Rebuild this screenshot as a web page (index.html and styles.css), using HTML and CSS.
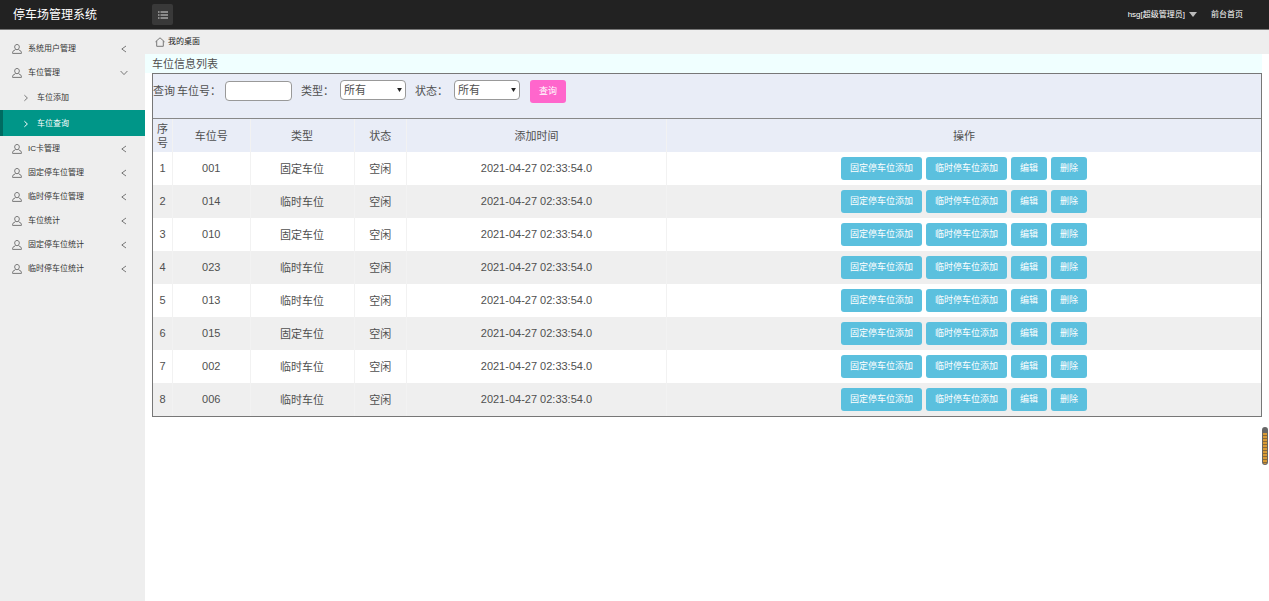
FILE: index.html
```html
<!DOCTYPE html>
<html lang="zh-CN">
<head>
<meta charset="utf-8">
<title>停车场管理系统</title>
<link rel="stylesheet" href="styles.css">
</head>
<body>
<svg class="sprite" aria-hidden="true">
  <symbol id="user" viewBox="0 0 10 10"><path d="M5 .5C3.500 .5 2.700 1.500 2.700 2.900C2.700 4.300 3.500 5.700 5 5.700C6.500 5.700 7.300 4.300 7.300 2.900C7.300 1.500 6.500 .5 5 .5ZM3.600 5.400C3.400 6.300 .6 6.600 .6 8.200V9.400H9.400V8.200C9.400 6.600 6.600 6.300 6.400 5.400"/></symbol>
  <symbol id="left" viewBox="0 0 8 8"><path d="M6 1L1.800 4L6 7"/></symbol>
  <symbol id="right" viewBox="0 0 8 8"><path d="M2.400 1.200L5.400 4L2.400 6.800"/></symbol>
  <symbol id="down" viewBox="0 0 8 8"><path d="M.6 2L4 5.600L7.400 2"/></symbol>
</svg>
<header class="topbar">
  <h1 class="brand">停车场管理系统</h1>
  <button class="toggle" type="button" aria-label="菜单">
    <svg viewBox="0 0 10 8"><path d="M0 1H1.500M2.500 1H10M0 4H1.500M2.500 4H10M0 7H1.500M2.500 7H10"/></svg>
  </button>
  <nav class="account">
    <a href="#">hsg[超级管理员]<svg class="caret" viewBox="0 0 8 5"><path d="M0 0H8L4 5Z"/></svg></a>
    <a href="#">前台首页</a>
  </nav>
</header>
<div class="shell">
  <nav class="sidebar">
    <a class="item" href="#"><svg class="user"><use href="#user"/></svg><span>系统用户管理</span><svg class="chev"><use href="#left"/></svg></a>
    <a class="item" href="#"><svg class="user"><use href="#user"/></svg><span>车位管理</span><svg class="chev"><use href="#down"/></svg></a>
    <a class="sub" href="#"><svg class="chev"><use href="#right"/></svg><span>车位添加</span></a>
    <a class="sub active" href="#"><svg class="chev"><use href="#right"/></svg><span>车位查询</span></a>
    <a class="item" href="#"><svg class="user"><use href="#user"/></svg><span>IC卡管理</span><svg class="chev"><use href="#left"/></svg></a>
    <a class="item" href="#"><svg class="user"><use href="#user"/></svg><span>固定停车位管理</span><svg class="chev"><use href="#left"/></svg></a>
    <a class="item" href="#"><svg class="user"><use href="#user"/></svg><span>临时停车位管理</span><svg class="chev"><use href="#left"/></svg></a>
    <a class="item" href="#"><svg class="user"><use href="#user"/></svg><span>车位统计</span><svg class="chev"><use href="#left"/></svg></a>
    <a class="item" href="#"><svg class="user"><use href="#user"/></svg><span>固定停车位统计</span><svg class="chev"><use href="#left"/></svg></a>
    <a class="item" href="#"><svg class="user"><use href="#user"/></svg><span>临时停车位统计</span><svg class="chev"><use href="#left"/></svg></a>
  </nav>
  <main class="main">
    <div class="crumb">
      <svg class="home" viewBox="0 0 10 10"><path d="M.5 4.800L5 .8L9.500 4.800M1.700 4V9.300H8.300V4"/></svg>
      <span>我的桌面</span>
    </div>
    <h2 class="title">车位信息列表</h2>
    <section class="panel">
      <form class="search">
        <span class="lead">查询</span>
        <label for="no">车位号<span class="colon">：</span></label>
        <input class="field" id="no" type="text">
        <label class="next" for="type">类型<span class="colon">：</span></label>
        <span class="pick"><select class="field" id="type"><option>所有</option></select><svg viewBox="0 0 6 5"><path d="M0 0H6L3 5Z"/></svg></span>
        <label class="next" for="state">状态<span class="colon">：</span></label>
        <span class="pick"><select class="field" id="state"><option>所有</option></select><svg viewBox="0 0 6 5"><path d="M0 0H6L3 5Z"/></svg></span>
        <button class="btn query" type="button">查询</button>
      </form>
      <table class="list">
        <colgroup><col class="c-index"><col class="c-no"><col class="c-type"><col class="c-state"><col class="c-time"><col></colgroup>
        <thead>
          <tr><th>序号</th><th>车位号</th><th>类型</th><th>状态</th><th>添加时间</th><th>操作</th></tr>
        </thead>
        <tbody>
          <tr><td class="num">1</td><td class="num">001</td><td>固定车位</td><td>空闲</td><td class="num">2021-04-27 02:33:54.0</td><td><div class="ops"><button class="btn" type="button">固定停车位添加</button><button class="btn" type="button">临时停车位添加</button><button class="btn" type="button">编辑</button><button class="btn" type="button">删除</button></div></td></tr>
          <tr><td class="num">2</td><td class="num">014</td><td>临时车位</td><td>空闲</td><td class="num">2021-04-27 02:33:54.0</td><td><div class="ops"><button class="btn" type="button">固定停车位添加</button><button class="btn" type="button">临时停车位添加</button><button class="btn" type="button">编辑</button><button class="btn" type="button">删除</button></div></td></tr>
          <tr><td class="num">3</td><td class="num">010</td><td>固定车位</td><td>空闲</td><td class="num">2021-04-27 02:33:54.0</td><td><div class="ops"><button class="btn" type="button">固定停车位添加</button><button class="btn" type="button">临时停车位添加</button><button class="btn" type="button">编辑</button><button class="btn" type="button">删除</button></div></td></tr>
          <tr><td class="num">4</td><td class="num">023</td><td>临时车位</td><td>空闲</td><td class="num">2021-04-27 02:33:54.0</td><td><div class="ops"><button class="btn" type="button">固定停车位添加</button><button class="btn" type="button">临时停车位添加</button><button class="btn" type="button">编辑</button><button class="btn" type="button">删除</button></div></td></tr>
          <tr><td class="num">5</td><td class="num">013</td><td>临时车位</td><td>空闲</td><td class="num">2021-04-27 02:33:54.0</td><td><div class="ops"><button class="btn" type="button">固定停车位添加</button><button class="btn" type="button">临时停车位添加</button><button class="btn" type="button">编辑</button><button class="btn" type="button">删除</button></div></td></tr>
          <tr><td class="num">6</td><td class="num">015</td><td>固定车位</td><td>空闲</td><td class="num">2021-04-27 02:33:54.0</td><td><div class="ops"><button class="btn" type="button">固定停车位添加</button><button class="btn" type="button">临时停车位添加</button><button class="btn" type="button">编辑</button><button class="btn" type="button">删除</button></div></td></tr>
          <tr><td class="num">7</td><td class="num">002</td><td>临时车位</td><td>空闲</td><td class="num">2021-04-27 02:33:54.0</td><td><div class="ops"><button class="btn" type="button">固定停车位添加</button><button class="btn" type="button">临时停车位添加</button><button class="btn" type="button">编辑</button><button class="btn" type="button">删除</button></div></td></tr>
          <tr><td class="num">8</td><td class="num">006</td><td>临时车位</td><td>空闲</td><td class="num">2021-04-27 02:33:54.0</td><td><div class="ops"><button class="btn" type="button">固定停车位添加</button><button class="btn" type="button">临时停车位添加</button><button class="btn" type="button">编辑</button><button class="btn" type="button">删除</button></div></td></tr>
        </tbody>
      </table>
    </section>
  </main>
</div>
<div class="meter" aria-hidden="true"></div>
</body>
</html>
```

FILE: styles.css
```css
* { box-sizing: border-box; }

body {
  margin: 0;
  min-height: 100vh;
  display: flex;
  flex-direction: column;
  background: #fff;
  color: #505050;
  font: 11px/14px "Liberation Sans", "Noto Sans CJK SC", sans-serif;
}

a { color: inherit; text-decoration: none; }
h1, h2 { margin: 0; font-weight: 400; }
button, input, select { font: inherit; color: inherit; }
svg { display: block; flex: none; fill: none; stroke: currentColor; }
.sprite { position: absolute; width: 0; height: 0; }

.topbar {
  height: 30px;
  display: flex;
  align-items: center;
  background: #222;
  color: #fff;
  border-bottom: 1px solid #777;
}
.brand { width: 152px; padding-left: 13px; font-size: 12px; }
.toggle {
  width: 21px;
  height: 21px;
  padding: 0;
  display: grid;
  place-items: center;
  border: 0;
  border-radius: 2px;
  background: #393939;
  color: #ddd;
}
.toggle svg { width: 10px; height: 8px; }
.account {
  margin-left: auto;
  padding-right: 26px;
  display: flex;
  gap: 14px;
  font-size: 8px;
}
.account a { display: flex; align-items: center; gap: 4px; }
.caret { width: 8px; height: 5px; fill: #bbb; stroke: none; }

.shell { flex: 1; display: flex; }
.sidebar {
  flex: none;
  width: 145px;
  padding-top: 6px;
  background: #eee;
  color: #333;
  font-size: 8px;
}
.item { height: 24px; padding: 1px 17px 0 12px; display: flex; align-items: center; gap: 6px; }
.item .chev { margin-left: auto; }
.user { width: 10px; height: 10px; color: #777; }
.chev { width: 8px; height: 8px; color: #777; }
.sub {
  height: 26px;
  padding: 2px 0 0 19px;
  display: flex;
  align-items: center;
  gap: 7px;
  border-left: 3px solid transparent;
}
.active { background: #009688; border-color: #006b61; color: #fff; }
.active .chev { color: #fff; }

.main { flex: 1; min-width: 0; }
.crumb {
  height: 24px;
  padding-left: 10px;
  display: flex;
  align-items: center;
  gap: 3px;
  background: #eee;
  color: #222;
  font-size: 8px;
}
.home { width: 10px; height: 10px; color: #777; }
.title {
  margin-right: 7px;
  padding: 3px 7px 2px;
  background: #f0ffff;
  font-size: 11px;
}
.panel { margin: 0 7px; border: 1px solid #777; }
.search {
  height: 45px;
  padding-top: 6px;
  display: flex;
  align-items: flex-start;
  line-height: 23px;
  background: #e9edf7;
  border-bottom: 1px solid #888;
}
.colon { font-family: "Noto Sans CJK TC", sans-serif; line-height: 1; }
.colon:lang(zh) { font-family: "Noto Sans CJK TC", sans-serif; }
.lead { margin-right: 2px; }
.next { margin: 0 6px 0 9px; }
.field {
  width: 67px;
  height: 20px;
  margin: 1px 0 0 4px;
  padding: 0 3px;
  border: 1px solid #999;
  border-radius: 4px;
  background: #fff;
  line-height: 18px;
}
.pick { display: grid; }
.pick .field { grid-area: 1 / 1; width: 66px; margin: 0; appearance: none; }
.pick svg {
  grid-area: 1 / 1;
  place-self: center end;
  width: 5px;
  height: 4px;
  margin-right: 4px;
  fill: #222;
  stroke: none;
  pointer-events: none;
}

.btn {
  height: 23px;
  padding: 0 9px;
  border: 0;
  border-radius: 3px;
  background: #5bc0de;
  color: #fff;
  font-size: 9px;
  line-height: 23px;
  white-space: nowrap;
}
.query { margin-left: 10px; background: #ff66cc; }

.list { width: 100%; table-layout: fixed; border-collapse: separate; border-spacing: 0; }
.list th, .list td {
  height: 33px;
  padding: 0 4px;
  border-right: 1px solid #f2f2f2;
  font-weight: 400;
  text-align: center;
  vertical-align: middle;
}
.list th:last-child, .list td:last-child { border-right: 0; }
.list th { background: #e9edf7; }
.list .num { padding-bottom: 2px; }
.list tbody tr:nth-child(even) { background: #efefef; }
.c-index { width: 20px; }
.c-no { width: 7%; }
.c-type { width: 9.4%; }
.c-state { width: 4.7%; }
.c-time { width: 23.5%; }
.ops { display: flex; justify-content: center; gap: 4px; }

.meter {
  position: fixed;
  right: 1px;
  top: 427px;
  width: 6px;
  height: 38px;
  border: 1px solid #666;
  border-top-width: 6px;
  border-radius: 3px;
  background: repeating-linear-gradient(#d89a35 0 2px, #8a6a38 2px 3px);
}
```
